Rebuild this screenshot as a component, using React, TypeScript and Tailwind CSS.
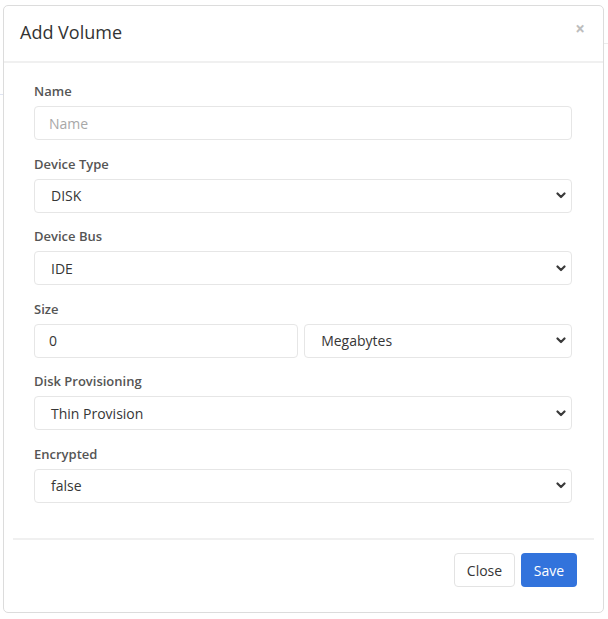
import React from 'react';

const font = { fontFamily: '"Open Sans", "Liberation Sans", sans-serif' };

function Chevron() {
  return (
    <svg width="10" height="7" viewBox="0 0 10 7" className="shrink-0">
      <polyline points="1.5,1.5 5,5 8.5,1.5" fill="none" stroke="#3a3a3a" strokeWidth="2.2" strokeLinecap="round" strokeLinejoin="round" />
    </svg>
  );
}

function SelectBox({ value }: { value: string }) {
  return (
    <div className="h-[34px] w-full rounded-[4px] border border-[#e6e6e6] bg-white flex items-center justify-between pl-[16px] pr-[5px] text-[14px] text-[#363636]">
      <span>{value}</span>
      <Chevron />
    </div>
  );
}

function TextBox({ value, placeholder }: { value?: string; placeholder?: string }) {
  return (
    <div className="h-[34px] w-full rounded-[4px] border border-[#e6e6e6] bg-white flex items-center pl-[14px] text-[14px]">
      {value ? <span className="text-[#363636]">{value}</span> : <span className="text-[#a8a8a8]">{placeholder}</span>}
    </div>
  );
}

function Field({ label, children }: { label: string; children: React.ReactNode }) {
  return (
    <div>
      <div className="h-5 leading-5 mb-[5px] text-[13px] font-semibold text-[#555]">{label}</div>
      {children}
    </div>
  );
}

export default function App() {
  return (
    <div className="w-[608px] h-[619px] bg-white relative overflow-hidden pt-[5px] pl-[3px]" style={font}>
      {/* faint backdrop lines */}
      <div className="absolute left-0 top-[94px] w-[4px] h-px bg-[#dfe4f2]" />
      <div className="absolute right-0 top-[43px] w-[5px] h-px bg-[#ececec]" />

      <div className="relative w-[601px] h-[608px] border border-[#dcdcdc] rounded-[5px] bg-white flex flex-col">
        {/* header */}
        <div className="h-[57px] shrink-0 border-b-2 border-[#f0f0f0] flex items-center justify-between pl-[16px] pr-[18px]">
          <h2 className="text-[18px] text-[#333] leading-none mt-[-4px]">Add Volume</h2>
          <span className="text-[17px] font-bold text-[#bdbdbd] leading-none mt-[-10px]">×</span>
        </div>

        {/* body */}
        <div className="pt-[18px] pl-[30px] pr-[31px] flex flex-col gap-[13.6px]">
          <Field label="Name">
            <TextBox placeholder="Name" />
          </Field>
          <Field label="Device Type">
            <SelectBox value="DISK" />
          </Field>
          <Field label="Device Bus">
            <SelectBox value="IDE" />
          </Field>
          <Field label="Size">
            <div className="flex gap-[6px]">
              <TextBox value="0" />
              <SelectBox value="Megabytes" />
            </div>
          </Field>
          <Field label="Disk Provisioning">
            <SelectBox value="Thin Provision" />
          </Field>
          <Field label="Encrypted">
            <SelectBox value="false" />
          </Field>
        </div>

        {/* footer */}
        <div className="mt-auto mb-[25px] mx-[9px] border-t-2 border-[#f0f0f0] pt-[13px] pr-[17px] flex justify-end gap-[6px]">
          <button className="h-[34px] w-[61px] rounded-[4px] border border-[#e3e3e3] bg-white text-[14px] text-[#363636]">Close</button>
          <button className="h-[34px] w-[56px] rounded-[4px] bg-[#3273dc] text-[14px] text-white">Save</button>
        </div>
      </div>
    </div>
  );
}
